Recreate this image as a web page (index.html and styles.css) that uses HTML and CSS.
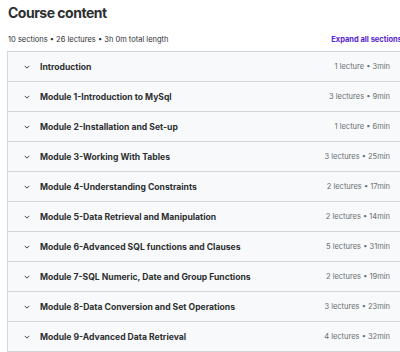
FILE: index.html
```html
<!DOCTYPE html>
<html>
<head>
<meta charset="utf-8">
<link rel="stylesheet" href="styles.css">
</head>
<body>
<div class="page">
  <h2 class="title">Course content</h2>
  <div class="meta-bar">
    <span class="summary">10 sections • 26 lectures • 3h 0m total length</span>
    <span class="expand">Expand all sections</span>
  </div>
  <div class="sections">
    <div class="row"><svg class="chev" viewBox="0 0 8 5"><path d="M1 1 L4 4 L7 1" /></svg><span class="name">Introduction</span><span class="info">1 lecture • 3min</span></div>
    <div class="row"><svg class="chev" viewBox="0 0 8 5"><path d="M1 1 L4 4 L7 1" /></svg><span class="name">Module 1-Introduction to MySql</span><span class="info">3 lectures • 9min</span></div>
    <div class="row"><svg class="chev" viewBox="0 0 8 5"><path d="M1 1 L4 4 L7 1" /></svg><span class="name">Module 2-Installation and Set-up</span><span class="info">1 lecture • 6min</span></div>
    <div class="row"><svg class="chev" viewBox="0 0 8 5"><path d="M1 1 L4 4 L7 1" /></svg><span class="name">Module 3-Working With Tables</span><span class="info">3 lectures • 25min</span></div>
    <div class="row"><svg class="chev" viewBox="0 0 8 5"><path d="M1 1 L4 4 L7 1" /></svg><span class="name">Module 4-Understanding Constraints</span><span class="info">2 lectures • 17min</span></div>
    <div class="row"><svg class="chev" viewBox="0 0 8 5"><path d="M1 1 L4 4 L7 1" /></svg><span class="name">Module 5-Data Retrieval and Manipulation</span><span class="info">2 lectures • 14min</span></div>
    <div class="row"><svg class="chev" viewBox="0 0 8 5"><path d="M1 1 L4 4 L7 1" /></svg><span class="name">Module 6-Advanced SQL functions and Clauses</span><span class="info">5 lectures • 31min</span></div>
    <div class="row"><svg class="chev" viewBox="0 0 8 5"><path d="M1 1 L4 4 L7 1" /></svg><span class="name">Module 7-SQL Numeric, Date and Group Functions</span><span class="info">2 lectures • 19min</span></div>
    <div class="row"><svg class="chev" viewBox="0 0 8 5"><path d="M1 1 L4 4 L7 1" /></svg><span class="name">Module 8-Data Conversion and Set Operations</span><span class="info">3 lectures • 23min</span></div>
    <div class="row"><svg class="chev" viewBox="0 0 8 5"><path d="M1 1 L4 4 L7 1" /></svg><span class="name">Module 9-Advanced Data Retrieval</span><span class="info">4 lectures • 32min</span></div>
  </div>
</div>
</body>
</html>
```
FILE: styles.css
```css
html, body {
  margin: 0;
  padding: 0;
  background: #ffffff;
  overflow: hidden;
}
body {
  font-family: Inter, "Noto Sans", sans-serif;
  color: #2d2f31;
}
.page {
  width: 398px;
  margin-left: 7px;
}
.title {
  margin: 0;
  padding-top: 3px;
  padding-left: 1px;
  font-size: 14px;
  line-height: 20px;
  font-weight: 700;
  letter-spacing: -0.5px;
}
.meta-bar {
  display: flex;
  justify-content: space-between;
  align-items: center;
  height: 24px;
  margin-top: 4px;
  white-space: nowrap;
}
.summary {
  font-size: 7.5px;
  color: #2d2f31;
  padding-left: 1px;
}
.expand {
  font-size: 7.5px;
  font-weight: 700;
  color: #5624d0;
  margin-right: 3px;
}
.sections {
  border: 1px solid #d1d7dc;
  border-right: none;
}
.row {
  display: flex;
  align-items: center;
  height: 29px;
  background: #f7f9fa;
  border-bottom: 1px solid #d1d7dc;
  padding-left: 16px;
  padding-right: 15px;
}
.row:last-child {
  border-bottom: none;
}
.chev {
  width: 6px;
  height: 4px;
  fill: none;
  stroke: #2d2f31;
  stroke-width: 1.2;
  margin-right: 10px;
}
.name {
  font-size: 8.6px;
  font-weight: 700;
  flex: 1;
  white-space: nowrap;
}
.info {
  font-size: 7.5px;
  color: #6a6f73;
  white-space: nowrap;
}
```
